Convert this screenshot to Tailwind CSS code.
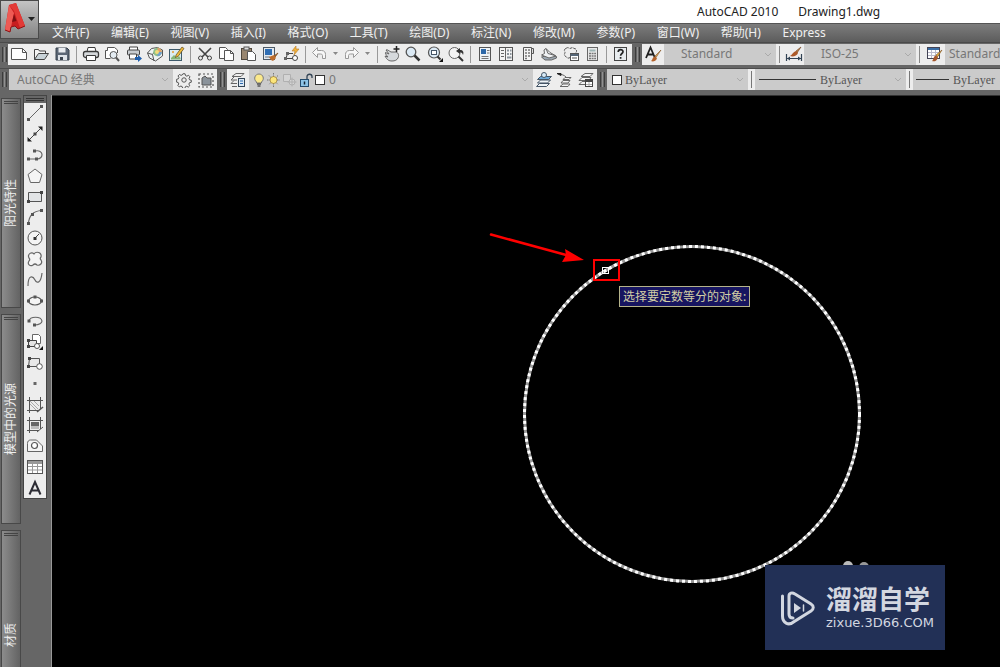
<!DOCTYPE html>
<html lang="zh-CN">
<head>
<meta charset="utf-8">
<meta name="viewport" content="width=device-width, initial-scale=1">
<title>AutoCAD 2010 Drawing1.dwg</title>
<script src="https://cdn.jsdelivr.net/npm/@tailwindcss/browser@4"></script>
</head>
<body class="h-screen overflow-hidden flex flex-col bg-[#666] font-['Noto_Sans','Noto_Sans_CJK_SC',sans-serif] text-xs text-[#333]">

<!-- Title bar -->
<header class="relative h-[23px] shrink-0 bg-white flex items-center">
  <h1 class="flex gap-5 pl-[697px] whitespace-nowrap text-[#222]"><span>AutoCAD 2010</span><span>Drawing1.dwg</span></h1>
  <button aria-label="应用程序菜单" class="absolute left-0 top-0 z-10 w-[39px] h-[39px] border border-[#4a4a4a] bg-linear-to-b from-[#c4c4c4] to-[#858585]">
    <svg viewBox="0 0 37 37" class="w-full h-full">
      <path d="M8 4 L15 2 L24 25 L17 28 L14 25 L10 26 L9 31 L4 29 Z" fill="#c81e20"/>
      <path d="M8 4 L4 29 L9 31 L13 12 Z" fill="#ee5a54"/>
      <path d="M8 4 L15 2 L24 25 L19 27 L13 10 Z" fill="#e23a36"/>
      <path d="M13 13 L15.500 20 L11 21 Z" fill="#7c0f12"/>
      <path d="M4 29 L9 31 L10 26 L14 25 L17 28 L24 25" fill="none" stroke="#8d1214"/>
      <path d="M27 16h7l-3.500 4z" fill="#222"/>
    </svg>
  </button>
</header>

<!-- Menu bar -->
<nav class="h-[20px] shrink-0 pl-[52px] whitespace-nowrap text-[#f0f0f0] bg-linear-to-b from-[#7d7d7d] to-[#5c5c5c] border-t border-[#555] border-b border-b-[#4a4a4a]">
  <div class="h-full max-w-[774px] flex items-center justify-between">
  <button>文件(F)</button><button>编辑(E)</button><button>视图(V)</button><button>插入(I)</button><button>格式(O)</button><button>工具(T)</button><button>绘图(D)</button><button>标注(N)</button><button>修改(M)</button><button>参数(P)</button><button>窗口(W)</button><button>帮助(H)</button><button>Express</button>
  </div>
</nav>

<!-- Standard, styles toolbars -->
<div class="h-[26px] shrink-0 flex items-center pb-1 pt-px overflow-hidden border-b border-[#4c4c4c]">
  <div class="w-2 h-[21px] shrink-0 flex justify-center gap-px pt-[3px] pb-[3px]"><i class="w-px bg-[#3c3c3c]"></i><i class="w-px bg-[#909090]"></i><i class="w-px bg-[#3c3c3c]"></i></div>
  <div class="h-[21px] shrink-0 flex items-center bg-[#ededed]">
    <div class="w-[65px] flex">
      <button aria-label="新建" class="flex-1 grid place-items-center"><svg width="18" height="18" viewBox="0 0 18 18" fill="#fff" stroke="#555"><path d="M1.500 3.500h11l4 4v7h-15z"/><path d="M12.500 3.500v4h4" fill="none"/></svg></button>
      <button aria-label="打开" class="flex-1 grid place-items-center"><svg width="18" height="18" viewBox="0 0 18 18" fill="#f4f4f4" stroke="#444"><path d="M2.500 14.500v-10h4l1 1.500h6v3"/><path d="M2.500 14.500l4-6h10l-4 6z" fill="#c9d3d8"/></svg></button>
      <button aria-label="保存" class="flex-1 grid place-items-center"><svg width="18" height="18" viewBox="0 0 18 18"><path d="M3 3h11l2 2v10H3z" fill="#5b6675" stroke="#39424e"/><path d="M5.500 3h7v4.500h-7z" fill="#e8ebef"/><path d="M5 10h9v5H5z" fill="#dde2e8"/><path d="M7 12h3v3H7z" fill="#39424e"/></svg></button>
    </div>
    <i class="w-px mx-[3px] h-[17px] bg-[#999]"></i>
    <div class="w-[107px] flex">
      <button aria-label="打印" class="flex-1 grid place-items-center"><svg width="18" height="18" viewBox="0 0 18 18" fill="#fff" stroke="#3a3a3a"><path d="M5 7l1-4.500h7L14 7"/><rect x="1.500" y="6.500" width="15" height="6" rx="2" fill="#d5d8db" stroke-width="1.300"/><path d="M4.500 10.500h9v5h-9z"/></svg></button>
      <button aria-label="打印预览" class="flex-1 grid place-items-center"><svg width="18" height="18" viewBox="0 0 18 18" fill="#fff" stroke="#555"><path d="M14.500 8V5l-3-2.500h-7v3h-2v8h5"/><circle cx="10.500" cy="10" r="3.500" fill="#e4ecf2"/><path d="M13 12.500l3 3.500" stroke-width="2"/></svg></button>
      <button aria-label="发布" class="flex-1 grid place-items-center"><svg width="18" height="18" viewBox="0 0 18 18" fill="#fff" stroke="#444"><path d="M4.500 5v-3h8v3"/><rect x="2.500" y="5" width="12" height="5" rx="1" fill="#c9cdd1"/><path d="M4.500 9h7v5h-7z"/><path d="M10 12h3v-2l4 3.500-4 3.500v-2h-3z" fill="#1f5fae" stroke="none"/></svg></button>
      <button aria-label="三维DWF" class="flex-1 grid place-items-center"><svg width="18" height="18" viewBox="0 0 18 18"><path d="M1.500 8l4-4.500 6-1 5 2.500v6l-7 5-6-3z" fill="#eef3f5" stroke="#555"/><path d="M1.500 8l5 1.500L8 16M6.500 9.500L9 6" fill="none" stroke="#555"/><circle cx="11.500" cy="7" r="4.300" fill="#8fc08a"/><path d="M11.500 2.700a4.300 4.300 0 0 1 4.300 4.300h-4.300z" fill="#e0a06a"/><path d="M11.500 7h4.300a4.300 4.300 0 0 1-4.300 4.300z" fill="#6f9fce"/><circle cx="11" cy="7" r="2" fill="#f2dc7a"/></svg></button>
      <button aria-label="图纸集" class="flex-1 grid place-items-center"><svg width="18" height="18" viewBox="0 0 18 18"><rect x="2.500" y="4.500" width="12" height="11" fill="#dcecf2" stroke="#3d5a6b"/><path d="M4 13l3-3 3 3 2-2 1.500 2v1.500H4z" fill="#86b577"/><circle cx="6" cy="7" r="1" fill="#e79a2e"/><path d="M9 10l6-8 2 1.500-6 8-2.500 1z" fill="#f0bb3b" stroke="#5a4820" stroke-width=".7"/></svg></button>
    </div>
    <i class="w-px mx-[3px] h-[17px] bg-[#999]"></i>
    <div class="w-[108px] flex">
      <button aria-label="剪切" class="flex-1 grid place-items-center"><svg width="18" height="18" viewBox="0 0 18 18" fill="none" stroke="#444"><path d="M3 3l9 9M15 3l-9 9" stroke-width="1.600"/><circle cx="4.500" cy="13" r="2"/><circle cx="13.500" cy="13" r="2"/></svg></button>
      <button aria-label="复制" class="flex-1 grid place-items-center"><svg width="18" height="18" viewBox="0 0 18 18" fill="#fff" stroke="#555"><path d="M2.500 2.500h6l2 2v9h-8z"/><path d="M7.500 5.500h6l3 3v7h-9z"/><path d="M13.500 5.500v3h3" fill="none"/></svg></button>
      <button aria-label="粘贴" class="flex-1 grid place-items-center"><svg width="18" height="18" viewBox="0 0 18 18"><rect x="2.500" y="3.500" width="10" height="11" fill="#99866f" stroke="#4e463c"/><rect x="5" y="2" width="5" height="3" fill="#ddd" stroke="#555"/><path d="M8.500 6.500h5l3 3v6h-8z" fill="#fff" stroke="#555"/></svg></button>
      <button aria-label="特性匹配" class="flex-1 grid place-items-center"><svg width="18" height="18" viewBox="0 0 18 18"><rect x="2.500" y="2.500" width="11" height="12" fill="#e4eaf0" stroke="#4d5965"/><path d="M4 4h7v6H4z" fill="#2f6eb4"/><path d="M4 12h5" stroke="#66727e"/><path d="M17 8l-4 3 1 1z" fill="#8a5a2c" stroke="#8a5a2c"/><path d="M8 12l5-2 2 3-3 3-2-1z" fill="#bd6d2c"/></svg></button>
      <button aria-label="块编辑器" class="flex-1 grid place-items-center"><svg width="18" height="18" viewBox="0 0 18 18" fill="none" stroke="#444"><path d="M4 13.500L5.500 8.500H11M3.500 13.500h8"/><path d="M2 12h3v3H2zM4 7h3v3H4z" fill="#666" stroke="none"/><circle cx="13" cy="13" r="2.500" fill="#fff"/><path d="M14 1l-4 5h3l-1 4 5-6h-3z" fill="#f1b33b" stroke="#b87822" stroke-width=".6"/></svg></button>
    </div>
    <i class="w-px mx-[3px] h-[17px] bg-[#999]"></i>
    <div class="w-[65px] flex">
      <button aria-label="放弃" class="flex-1 grid place-items-center"><svg width="18" height="18" viewBox="0 0 18 18" fill="#f7f7f7" stroke="#999"><path d="M2.500 7.500l5-5v3h4c3 0 4 2 4 4v4h-3v-3c0-1-1-1.500-2-1.500h-3v3.500z"/></svg></button>
      <button aria-label="放弃列表" class="w-3 grid place-items-center"><svg width="6" height="4"><path d="M0 0h5L2.500 3z" fill="#888"/></svg></button>
      <button aria-label="重做" class="flex-1 grid place-items-center"><svg width="18" height="18" viewBox="0 0 18 18" fill="#f7f7f7" stroke="#999"><path d="M15.500 7.500l-5-5v3h-4c-3 0-4 2-4 4v4h3v-3c0-1 1-1.500 2-1.500h3v3.500z"/></svg></button>
      <button aria-label="重做列表" class="w-3 grid place-items-center"><svg width="6" height="4"><path d="M0 0h5L2.500 3z" fill="#888"/></svg></button>
    </div>
    <i class="w-px mx-[3px] h-[17px] bg-[#999]"></i>
    <div class="w-[86px] flex">
      <button aria-label="平移" class="flex-1 grid place-items-center"><svg width="18" height="18" viewBox="0 0 18 18"><path d="M3 5c1-1 3 1 5 2l5 0c3 1 3 4 2 6s-3 3-6 3-5-1-7-5l3 1C3 10 2 8 2.500 7.500L6 9z" fill="#d6d9dc" stroke="#666"/><path d="M13.500 1v6M10.500 4h6" stroke="#222" stroke-width="1.500"/></svg></button>
      <button aria-label="实时缩放" class="flex-1 grid place-items-center"><svg width="18" height="18" viewBox="0 0 18 18"><circle cx="7" cy="7" r="4.800" fill="#dbe9f4" stroke="#555" stroke-width="1.300"/><path d="M10.500 10.500l5 5" stroke="#333" stroke-width="2.500"/></svg></button>
      <button aria-label="窗口缩放" class="flex-1 grid place-items-center"><svg width="18" height="18" viewBox="0 0 18 18"><circle cx="8" cy="7.500" r="5.500" fill="#dbe9f4" stroke="#555" stroke-width="1.200"/><rect x="5.500" y="5.500" width="5" height="4" fill="#fff" stroke="#456"/><path d="M11.500 11.500l3 3" stroke="#333" stroke-width="2"/><path d="M17 13v4h-4z" fill="#111"/></svg></button>
      <button aria-label="缩放上一个" class="flex-1 grid place-items-center"><svg width="18" height="18" viewBox="0 0 18 18"><circle cx="7.500" cy="8" r="5.500" fill="#f3f3f3" stroke="#666"/><path d="M11.500 11.500l4.500 4.500" stroke="#333" stroke-width="2"/><path d="M9 6l4-3v2c3 0 4 2 3 5-.5-2-1.500-2.500-3-2.500V9z" fill="#333"/></svg></button>
    </div>
    <i class="w-px mx-[3px] h-[17px] bg-[#999]"></i>
    <div class="w-[129px] flex">
      <button aria-label="特性" class="flex-1 grid place-items-center"><svg width="18" height="18" viewBox="0 0 18 18"><rect x="3.500" y="2.500" width="11" height="13" fill="#eef3f7" stroke="#555"/><path d="M5 4h5v5H5z" fill="#2d68a8"/><path d="M11 5.500h2.500M11 8h2.500M5.500 11.500h7M5.500 13.500h7" stroke="#777"/></svg></button>
      <button aria-label="设计中心" class="flex-1 grid place-items-center"><svg width="18" height="18" viewBox="0 0 18 18"><rect x="2.500" y="2.500" width="13" height="13" fill="#f4f4f4" stroke="#555"/><path d="M8.500 3v12M4 5.500h3M4 8.500h3M4 11.500h3" stroke="#666"/><path d="M10 4.500h2v2h-2zM13 4.500h1.500v2H13zM10 8h2v2h-2zM13 8h1.500v2H13zM10 11.500h4.500v2H10z" fill="#8b949c"/></svg></button>
      <button aria-label="工具选项板" class="flex-1 grid place-items-center"><svg width="18" height="18" viewBox="0 0 18 18"><path d="M4.500 2.500h8v13h-8z" fill="#f4f4f4" stroke="#555"/><path d="M12.500 3.500h2v5h-2z" fill="#ddd" stroke="#555"/><path d="M6 5h2M9 5h2M6 8h2M9 8h2M6 11h2M9 11h2M6 13.500h2" stroke="#777" stroke-width="1.300"/></svg></button>
      <button aria-label="图纸集管理器" class="flex-1 grid place-items-center"><svg width="18" height="18" viewBox="0 0 18 18" stroke="#666"><path d="M1.500 12l8-2 7 1.500v1.500l-5 2H5z" fill="#9da8b2"/><path d="M1.500 10l3-1.500L4 5l2-1.500 4 4 6 3.500-7 2z" fill="#f0f2f4"/><path d="M6 3.500l2 5 7 2" fill="none"/></svg></button>
      <button aria-label="标记集" class="flex-1 grid place-items-center"><svg width="18" height="18" viewBox="0 0 18 18" fill="none" stroke="#555"><path d="M4 3.500c2-2 3 0 4 0s2-2 4 0c3 0 3 3 2 4M4 3.500c-3 1-1 3-1 4s-2 3 1 4c1 2 3 2 4 1" stroke-dasharray="3 1"/><rect x="8.500" y="8.500" width="8" height="7" fill="#fff"/><path d="M8.500 10h8" stroke="#567" stroke-width="2"/><path d="M10 13h5" /></svg></button>
      <button aria-label="快速计算器" class="flex-1 grid place-items-center"><svg width="18" height="18" viewBox="0 0 18 18"><rect x="4.500" y="2.500" width="10" height="13" fill="#e8e8e8" stroke="#666"/><path d="M6.500 4.500h6v2h-6z" fill="#9db4b4"/><path d="M6 8.500h7M6 11h7M6 13.500h7" stroke="#777" stroke-dasharray="2 .6" stroke-width="1.400"/></svg></button>
    </div>
    <i class="w-px mx-[3px] h-[17px] bg-[#999]"></i>
    <button aria-label="帮助" class="w-[22px] grid place-items-center"><svg width="18" height="18" viewBox="0 0 18 18"><rect x="2.500" y="2.500" width="12" height="13" fill="#e8ecef" stroke="#444"/><path d="M6.200 7c0-3.200 4.800-3.200 4.800-.3 0 1.800-2.400 1.800-2.400 4M8.600 12v1.800" fill="none" stroke="#222" stroke-width="1.700"/></svg></button>
  </div>
  <div class="w-[10px] h-[21px] shrink-0 flex justify-center gap-px py-[3px]"><i class="w-px bg-[#3c3c3c]"></i><i class="w-px bg-[#909090]"></i><i class="w-px bg-[#3c3c3c]"></i></div>
  <div class="h-[21px] grow flex items-center bg-[#ededed] text-[#777]">
    <button aria-label="文字样式" class="w-[22px] shrink-0 grid place-items-center"><svg width="18" height="18" viewBox="0 0 18 18"><path d="M2 13L6.500 2.500 11 13M3.500 9.500h6" fill="none" stroke="#222" stroke-width="1.800"/><path d="M17 5l-6 6 1 1.500z" fill="#d9a860" stroke="#805020" stroke-width=".6"/><path d="M7 16c2-1 1-4 4-4.500l2 2C12 16 9 17 7 16z" fill="#b5622a"/></svg></button>
    <div class="relative h-full w-[112px] shrink-0 bg-[#cbcbcb]"><select aria-label="文字样式名" class="appearance-none w-full h-full pl-[17px] outline-none"><option>Standard</option></select><svg class="absolute right-1 top-2 pointer-events-none" width="8" height="6" fill="none" stroke="#aaa"><path d="M1 1l3 3 3-3"/></svg></div>
    <i class="w-px mx-[3px] h-[17px] shrink-0 bg-[#888]"></i>
    <button aria-label="标注样式" class="w-[21px] shrink-0 grid place-items-center"><svg width="18" height="18" viewBox="0 0 18 18"><path d="M1.500 9v7M16.500 9v7M2 13.500h14" stroke="#345" stroke-width="1.200"/><path d="M2 13.500l3-2v4zM16 13.500l-3-2v4z" fill="#345"/><path d="M16 2l-5 4 1 2z" fill="#b98243" stroke="#704020" stroke-width=".6"/><path d="M5 11c2-1 3-4 6-5l2 2c-1 3-5 4-8 3z" fill="#ad5a29"/></svg></button>
    <div class="relative h-full w-[112px] shrink-0 bg-[#cbcbcb]"><select aria-label="标注样式名" class="appearance-none w-full h-full pl-[17px] outline-none"><option>ISO-25</option></select><svg class="absolute right-1 top-2 pointer-events-none" width="8" height="6" fill="none" stroke="#aaa"><path d="M1 1l3 3 3-3"/></svg></div>
    <i class="w-px mx-[3px] h-[17px] shrink-0 bg-[#888]"></i>
    <button aria-label="表格样式" class="w-[22px] shrink-0 grid place-items-center"><svg width="18" height="18" viewBox="0 0 18 18"><rect x="2.500" y="2.500" width="12" height="11" fill="#fff" stroke="#445"/><path d="M3 4h11" stroke="#3b6ea5" stroke-width="2"/><path d="M3 7.500h11M3 10.500h11M6.500 5v8M10.500 5v8" stroke="#bbc"/><path d="M17 5l-6 5 1.500 2z" fill="#e0b040" stroke="#805020" stroke-width=".6"/><path d="M7 16c2-1 1-5 4-5.500l2 2C12 16 9 17 7 16z" fill="#a5562a"/></svg></button>
    <div class="h-full grow basis-[55px] min-w-0 bg-[#cbcbcb]"><select aria-label="表格样式名" class="appearance-none w-full h-full pl-[4px] outline-none"><option>Standard</option></select></div>
  </div>
</div>

<!-- Workspace, layer and property toolbars -->
<div class="h-[26px] shrink-0 flex items-center pb-[5px] overflow-hidden text-[#777]">
  <div class="w-[9px] h-[21px] shrink-0 flex justify-center gap-px py-[3px]"><i class="w-px bg-[#3c3c3c]"></i><i class="w-px bg-[#909090]"></i><i class="w-px bg-[#3c3c3c]"></i></div>
  <div class="h-[21px] w-[208px] shrink-0 flex items-center bg-[#ededed]">
    <div class="relative h-full w-[164px] bg-[#cbcbcb]"><select aria-label="工作空间" class="appearance-none w-full h-full pl-[8px] outline-none"><option>AutoCAD 经典</option></select><svg class="absolute right-1 top-2 pointer-events-none" width="8" height="6" fill="none" stroke="#aaa"><path d="M1 1l3 3 3-3"/></svg></div>
    <button aria-label="工作空间设置" class="flex-1 grid place-items-center"><svg width="16" height="16" viewBox="0 0 18 18" fill="none" stroke="#444"><circle cx="9" cy="9" r="2.500"/><path d="M7.800 2h2.400l.5 2 1.500.7 1.900-1 1.600 1.700-1 1.800.5 1.500 2 .6v2.200l-2 .5-.7 1.600 1 1.800-1.700 1.600-1.700-1-1.500.5-.6 2H7.500l-.5-2-1.500-.7-1.800 1-1.600-1.700 1-1.700-.6-1.500-1.800-.5V8.200l1.900-.5.700-1.500-1-1.800 1.600-1.600 1.800 1 1.400-.6z" /></svg></button>
    <button aria-label="我的工作空间" class="flex-1 grid place-items-center"><svg width="18" height="18" viewBox="0 0 18 18"><rect x="2" y="3" width="14" height="13" fill="none" stroke="#555" stroke-width="1.200" stroke-dasharray="2 2"/><path d="M5 14V7l3-2 2 2h4v7z" fill="#8a929a" stroke="#555"/></svg></button>
  </div>
  <div class="w-[10px] h-[21px] shrink-0 flex justify-center gap-px py-[3px]"><i class="w-px bg-[#3c3c3c]"></i><i class="w-px bg-[#909090]"></i><i class="w-px bg-[#3c3c3c]"></i></div>
  <div class="h-[21px] w-[370px] shrink-0 flex items-center bg-[#ededed]">
    <button aria-label="图层特性" class="w-[22px] grid place-items-center"><svg width="18" height="18" viewBox="0 0 18 18" fill="none" stroke="#666"><path d="M3 5.500l4-3h8l-3 3zM8 9H2l3-3M8 12.500H2L5 9.500M8 15.500H3"/><rect x="9.500" y="7.500" width="6" height="8" fill="#dce9f5" stroke="#345"/><path d="M11 10h3M11 12.500h3" stroke="#2c68ad"/></svg></button>
    <div class="relative h-full w-[284px] flex items-center bg-[#cbcbcb] pl-[2px]">
      <button aria-label="开关图层" class="w-[15px] grid place-items-center"><svg width="14" height="16" viewBox="0 0 14 16"><path d="M4.500 10C1 7 3 2 7 2s6 5 2.500 8v1h-5z" fill="#fbe98c" stroke="#777"/><path d="M5 12h4M5.500 14h3" stroke="#555" stroke-width="1.300"/></svg></button>
      <button aria-label="冻结图层" class="w-[15px] grid place-items-center"><svg width="15" height="16" viewBox="0 0 15 16"><path d="M7.500 1v14M1 8h13M3 3.500l9 9M12 3.500l-9 9" stroke="#777" stroke-dasharray="1.500 1"/><circle cx="7.500" cy="8" r="3.500" fill="#fbe57b" stroke="#987a30" stroke-width=".7"/></svg></button>
      <button aria-label="视口冻结" class="w-[16px] grid place-items-center"><svg width="15" height="16" viewBox="0 0 15 16" fill="#d4d4d4" stroke="#b0b0b0"><path d="M1.500 2.500h7v7h-7z"/><circle cx="10" cy="10" r="3"/><path d="M10 5.500v9M5.500 10h9"/></svg></button>
      <button aria-label="锁定图层" class="w-[18px] grid place-items-center"><svg width="16" height="16" viewBox="0 0 16 16"><path d="M9 8V4.500c0-3 5-3 5 0V6" fill="none" stroke="#345" stroke-width="1.300"/><rect x="2.500" y="7.500" width="8" height="7" fill="#8dc4e8" stroke="#234a6b"/><path d="M6.500 9.500v3" stroke="#123" stroke-width="1.500"/></svg></button>
      <i class="w-[10px] h-[10px] shrink-0 border border-[#333] bg-white"></i>
      <select aria-label="当前图层" class="appearance-none min-w-0 grow h-full pl-[4px] outline-none"><option>0</option></select>
      <svg class="absolute right-1 top-2 pointer-events-none" width="8" height="6" fill="none" stroke="#aaa"><path d="M1 1l3 3 3-3"/></svg>
    </div>
    <button aria-label="置为当前" class="flex-1 grid place-items-center"><svg width="18" height="18" viewBox="0 0 18 18" stroke="#456" fill="#eef4f8"><path d="M1.500 15.500l3-3h10l-3 3zM2.500 12l3-3h10l-3 3z"/><path d="M2.500 8.500l3-3h11l-3 3z" fill="#6ba7d6"/><circle cx="9" cy="4" r="2.500" fill="#d8ebf8"/></svg></button>
    <button aria-label="上一个图层" class="flex-1 grid place-items-center"><svg width="18" height="18" viewBox="0 0 18 18" stroke="#666" fill="#f4f4f4"><path d="M4 15.500l3-2.500h7l-2 2.500zM5 12l2-2.500h7L12 12zM7 8.500l2-2h6l-2 2z"/><path d="M10 6C8 4 6 3.500 3 3" fill="none"/><path d="M1 2.500h4v2z" fill="#222" stroke="#222"/></svg></button>
    <button aria-label="图层状态" class="flex-1 grid place-items-center"><svg width="18" height="18" viewBox="0 0 18 18" stroke="#666" fill="#f4f4f4"><path d="M4 5.500l4-3h8l-3 3zM2 9.500l3-3h9l-2 3zM2 13.500l3-3h5v3z"/><rect x="8.500" y="8.500" width="7" height="7" fill="#fff" stroke="#444"/><path d="M8.500 10h7" stroke="#444" stroke-width="2"/><path d="M12 11v4M9 13.500h6" stroke="#aaa"/></svg></button>
  </div>
  <div class="w-[10px] h-[21px] shrink-0 flex justify-center gap-px py-[3px]"><i class="w-px bg-[#3c3c3c]"></i><i class="w-px bg-[#909090]"></i><i class="w-px bg-[#3c3c3c]"></i></div>
  <div class="h-[21px] grow flex items-center bg-[#ededed] font-['Liberation_Serif',serif] text-[#555]">
    <div class="relative h-full w-[141px] shrink-0 flex items-center bg-[#cbcbcb] pl-[5px]"><i class="w-[10px] h-[10px] border border-[#333] bg-white"></i><select aria-label="颜色" class="appearance-none min-w-0 grow h-full pl-[3px] outline-none"><option>ByLayer</option></select><svg class="absolute right-1 top-2 pointer-events-none" width="8" height="6" fill="none" stroke="#aaa"><path d="M1 1l3 3 3-3"/></svg></div>
    <i class="w-px mx-[3px] h-[17px] shrink-0 bg-[#777]"></i>
    <div class="relative h-full w-[151px] shrink-0 flex items-center bg-[#cbcbcb] pl-[4px]"><i class="w-[57px] h-px shrink-0 bg-[#333]"></i><select aria-label="线型" class="appearance-none min-w-0 grow h-full pl-[4px] outline-none"><option>ByLayer</option></select><svg class="absolute right-1 top-2 pointer-events-none" width="8" height="6" fill="none" stroke="#aaa"><path d="M1 1l3 3 3-3"/></svg></div>
    <i class="w-px mx-[3px] h-[17px] shrink-0 bg-[#777]"></i>
    <div class="h-full grow min-w-0 flex items-center bg-[#cbcbcb] pl-[3px]"><i class="w-[33px] h-px shrink-0 bg-[#333]"></i><select aria-label="线宽" class="appearance-none min-w-0 grow h-full pl-[4px] outline-none"><option>ByLayer</option></select></div>
  </div>
</div>

<main class="flex grow min-h-0">
  <!-- Collapsed palettes -->
  <aside class="w-[22px] shrink-0 pt-[3px] pl-px flex flex-col gap-[6px] overflow-hidden text-[#eee]">
    <section class="relative w-5 h-[210px] shrink-0 flex items-center justify-center border border-[#484848] bg-linear-to-r from-[#8c8c8c] to-[#636363]"><i class="absolute top-[2px] left-[2px] right-[2px] h-[3px] border-y border-[#444]"></i><h2 class="rotate-180 [writing-mode:vertical-rl] [text-orientation:sideways]">阳光特性</h2></section>
    <section class="relative w-5 h-[210px] shrink-0 flex items-center justify-center border border-[#484848] bg-linear-to-r from-[#8c8c8c] to-[#636363]"><i class="absolute top-[2px] left-[2px] right-[2px] h-[3px] border-y border-[#444]"></i><h2 class="rotate-180 [writing-mode:vertical-rl] [text-orientation:sideways]">模型中的光源</h2></section>
    <section class="relative w-5 h-[210px] shrink-0 flex items-center justify-center border border-[#484848] bg-linear-to-r from-[#8c8c8c] to-[#636363]"><i class="absolute top-[2px] left-[2px] right-[2px] h-[3px] border-y border-[#444]"></i><h2 class="rotate-180 [writing-mode:vertical-rl] [text-orientation:sideways]">材质</h2></section>
  </aside>

  <!-- Draw toolbar -->
  <div class="w-[30px] shrink-0 pl-px border-r border-[#999]">
    <div class="w-[24px] border border-[#444]">
      <div class="h-[7px] flex flex-col gap-px px-[2px] pt-[2px] bg-[#666]"><i class="h-px bg-[#333]"></i><i class="h-px bg-[#333]"></i></div>
      <div class="h-[395px] flex flex-col bg-[#ededed]">
        <button aria-label="直线" class="flex-1 grid place-items-center"><svg width="18" height="18" viewBox="0 0 18 18"><path d="M2.500 15.500l13-13" stroke="#666"/><path d="M1 14h3v3H1zM14 1h3v3h-3z" fill="#555"/></svg></button>
        <button aria-label="构造线" class="flex-1 grid place-items-center"><svg width="18" height="18" viewBox="0 0 18 18"><path d="M3 15L15 3" stroke="#444"/><path d="M1.500 12v4.500H6zM12 1.500h4.500V6z" fill="#222"/><path d="M7.500 7.500h3v3h-3z" fill="#444"/></svg></button>
        <button aria-label="多段线" class="flex-1 grid place-items-center"><svg width="18" height="18" viewBox="0 0 18 18"><path d="M9 5c9-2 9 8 2 8H3" fill="none" stroke="#666" stroke-width="1.200"/><path d="M7 3.500h3v3H7zM9 11.500h3v3H9zM1 11.500h3v3H1z" fill="#555"/></svg></button>
        <button aria-label="正多边形" class="flex-1 grid place-items-center"><svg width="18" height="18" viewBox="0 0 18 18"><path d="M9 2l7 5.500L13.500 15.500h-9L2 7.500z" fill="#f4f4f4" stroke="#666"/></svg></button>
        <button aria-label="矩形" class="flex-1 grid place-items-center"><svg width="18" height="18" viewBox="0 0 18 18"><path d="M2.500 4.500h13v9h-13z" fill="#e2e4e6" stroke="#555"/><path d="M14 3h3v3h-3zM1 12h3v3H1z" fill="#444"/></svg></button>
        <button aria-label="圆弧" class="flex-1 grid place-items-center"><svg width="18" height="18" viewBox="0 0 18 18"><path d="M2.500 15.500C3 7 8 3 15.500 2.500" fill="none" stroke="#666" stroke-width="1.200"/><path d="M1 14h3v3H1zM5 5h3v3H5zM14 1h3v3h-3z" fill="#555"/></svg></button>
        <button aria-label="圆" class="flex-1 grid place-items-center"><svg width="18" height="18" viewBox="0 0 18 18"><circle cx="9" cy="9" r="7" fill="#f4f4f4" stroke="#555"/><path d="M9 9l4-4" stroke="#444"/><path d="M7.500 8h3v3h-3z" fill="#333"/></svg></button>
        <button aria-label="修订云线" class="flex-1 grid place-items-center"><svg width="18" height="18" viewBox="0 0 18 18"><path d="M8 4c2-3 8-2 7 3-1 1-1 2 0 3 2 3-1 6-4 5-2-2-3-1-4 0-3 2-6-1-4-4 1-1 1-2 0-3-2-4 3-7 5-4z" fill="#f4f4f4" stroke="#666" stroke-width="1.200"/></svg></button>
        <button aria-label="样条曲线" class="flex-1 grid place-items-center"><svg width="18" height="18" viewBox="0 0 18 18"><path d="M2 15C2 3 7 5 9 9s6 3 7-7" fill="none" stroke="#666" stroke-width="1.200"/></svg></button>
        <button aria-label="椭圆" class="flex-1 grid place-items-center"><svg width="18" height="18" viewBox="0 0 18 18"><ellipse cx="9" cy="9" rx="6.500" ry="4" fill="#f4f4f4" stroke="#555" stroke-width="1.200"/><path d="M1 7.500h3v3H1zM14 7.500h3v3h-3zM7.500 3.500h3v3h-3z" fill="#555"/></svg></button>
        <button aria-label="椭圆弧" class="flex-1 grid place-items-center"><svg width="18" height="18" viewBox="0 0 18 18"><path d="M3 9c1-5 12-5 13 0 0 2-3 4-7 4" fill="none" stroke="#666" stroke-width="1.200"/><path d="M1.500 7.500h3v3h-3zM7 11.500h3v3H7z" fill="#555"/></svg></button>
        <button aria-label="插入块" class="flex-1 grid place-items-center"><svg width="18" height="18" viewBox="0 0 18 18"><path d="M6.500 1.500h6l2 2v7h-8z" fill="#fff" stroke="#666"/><path d="M2.500 7.500h8v6h-8z" fill="#e4e4e4" stroke="#444"/><path d="M1 6h3v3H1zM1 12h3v3H1z" fill="#444"/><circle cx="11" cy="13" r="2.500" fill="#fff" stroke="#555"/><path d="M17 13v4h-4z" fill="#111"/></svg></button>
        <button aria-label="创建块" class="flex-1 grid place-items-center"><svg width="18" height="18" viewBox="0 0 18 18"><path d="M3.500 4.500h10v8h-11z" fill="#e8e8e8" stroke="#555"/><path d="M2 3h3v3H2zM1 11h3v3H1z" fill="#444"/><circle cx="13.500" cy="12.500" r="2.800" fill="#fff" stroke="#555"/></svg></button>
        <button aria-label="点" class="flex-1 grid place-items-center"><svg width="18" height="18" viewBox="0 0 18 18"><path d="M7.500 7h3v3h-3z" fill="#666"/></svg></button>
        <button aria-label="图案填充" class="flex-1 grid place-items-center"><svg width="18" height="18" viewBox="0 0 18 18" fill="none" stroke="#555"><path d="M3.500 1v16M14.500 1v12M1 4.500h16M1 14.500h12"/><path d="M4 8l6 6M4 5l8 8M8 5l5 5" stroke="#aaa"/><path d="M11 16l6-5" stroke-width="1.500"/></svg></button>
        <button aria-label="渐变色" class="flex-1 grid place-items-center"><svg width="18" height="18" viewBox="0 0 18 18" fill="none" stroke="#555"><path d="M5 6h8v4H5z" fill="#666" stroke="none"/><path d="M5 10h8v3H5z" fill="#bbb" stroke="none"/><path d="M3.500 1v16M14.500 1v12M1 4.500h16M1 14.500h12M11 16l6-5"/></svg></button>
        <button aria-label="面域" class="flex-1 grid place-items-center"><svg width="18" height="18" viewBox="0 0 18 18"><path d="M1.500 14.500v-8c0-2 1-3.500 3-3.500h6l6 6v5.500z" fill="#f4f4f4" stroke="#666"/><circle cx="8.500" cy="8.500" r="3" fill="#fff" stroke="#555" stroke-width="1.200"/></svg></button>
        <button aria-label="表格" class="flex-1 grid place-items-center"><svg width="18" height="18" viewBox="0 0 18 18"><rect x="1.500" y="2.500" width="15" height="13" fill="#fff" stroke="#555"/><path d="M2 4.500h14" stroke="#999" stroke-width="3"/><path d="M2 8.500h14M2 12h14M6.500 6v9M11.500 6v9" stroke="#999"/></svg></button>
        <button aria-label="多行文字" class="flex-1 grid place-items-center"><svg width="18" height="18" viewBox="0 0 18 18"><path d="M3.500 15.500L9 3l5.500 12.500M5.500 11.500h7" fill="none" stroke="#2c2c34" stroke-width="2"/></svg></button>
      </div>
    </div>
  </div>

  <!-- Drawing canvas -->
  <div class="relative grow bg-black border-t border-[#333] overflow-hidden">
    <svg class="absolute left-0 top-0" width="948" height="571" viewBox="52 96 948 571" fill="none">
      <circle cx="692" cy="414" r="167.500" stroke="#999" stroke-width="3"/>
      <circle cx="692" cy="414" r="167.500" stroke="#fff" stroke-width="3" stroke-dasharray="3 3"/>
      <path d="M491 234.500L568 255.500" stroke="#f00" stroke-width="2.500" stroke-linecap="round"/>
      <path d="M584 260l-22 2 4-7-1-6z" fill="#f00"/>
      <rect x="594" y="260" width="25" height="20" stroke="#f00" stroke-width="2"/>
      <rect x="602.500" y="267.500" width="6" height="6" stroke="#fff"/>
      <circle cx="848" cy="566" r="5" fill="#bbb"/><circle cx="864" cy="567" r="5" fill="#999"/>
    </svg>
    <p class="absolute left-[567px] top-[190px] w-[131px] h-[21px] flex items-center pl-[3px] whitespace-nowrap border border-[#b5b38a] bg-[#171560] text-[#d2cfa6]">选择要定数等分的对象:</p>
    <div class="absolute left-[713px] top-[469px] w-[180px] h-[85px] flex items-center gap-[11px] pl-[15px] bg-[#223056] text-[#d3d7e0]">
      <svg class="shrink-0" width="35" height="38" viewBox="0 0 35 38" fill="none" stroke="currentColor" stroke-linecap="round">
        <path d="M2.500 7v20c0 7 6 10 11 6L31 22c3-2 3-5 0-7L15 5c-3-2-6-1-6 2v18c0 3 2 4 4 4" stroke-width="3"/>
        <path d="M14 14l7 5-7 5z" fill="currentColor" stroke="none"/><path d="M23.500 16v6" stroke-width="1.500"/>
      </svg>
      <div class="flex flex-col whitespace-nowrap">
        <strong class="font-['Liberation_Sans','Noto_Sans_CJK_SC',sans-serif] text-[26px] leading-[30px] font-bold">溜溜自学</strong>
        <span class="font-['DejaVu_Sans',sans-serif] text-[13px] leading-4">zixue.3D66.COM</span>
      </div>
    </div>
  </div>
</main>
</body>
</html>
